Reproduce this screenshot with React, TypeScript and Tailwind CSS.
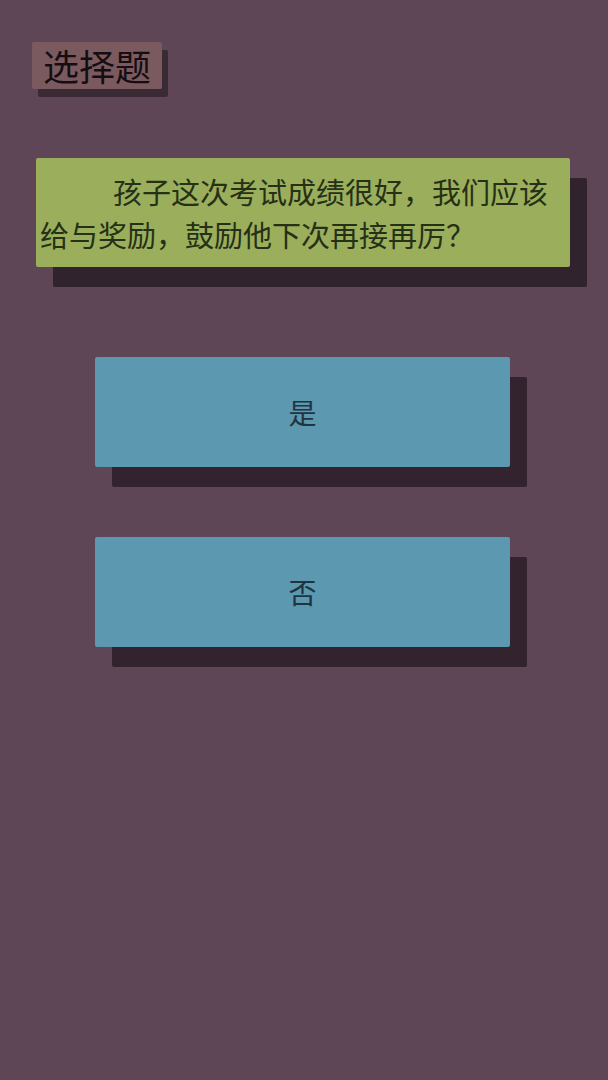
import React from 'react';

const font = { fontFamily: '"Noto Sans CJK SC", "Noto Sans", sans-serif' };

function AnswerButton({ label }: { label: string }) {
  return (
    <button
      className="ml-[95px] w-[415px] h-[110px] rounded-[2px] bg-[#5c98af] text-[#1e3440] text-[28px] flex items-center justify-center shadow-[17px_20px_0_#33232e]"
      style={font}
    >
      {label}
    </button>
  );
}

export default function App() {
  return (
    <div className="w-[608px] h-[1080px] bg-[#5f4656] flex flex-col overflow-hidden" style={font}>
      {/* 标题 */}
      <div className="mt-[42px] ml-[32px] w-[130px] h-[47px] rounded-[2px] bg-[#7b5a5f] text-[#150d12] text-[36px] leading-[47px] text-center shadow-[6px_8px_0_#3a2a34]">
        选择题
      </div>

      {/* 题目 */}
      <div className="mt-[69px] ml-[36px] w-[534px] h-[109px] rounded-[2px] bg-[#9aae5c] text-[#263016] text-[29px] leading-[43px] pl-[4px] pt-[12px] indent-[73px] shadow-[17px_20px_0_#31232d]">
        孩子这次考试成绩很好，我们应该给与奖励，鼓励他下次再接再厉？
      </div>

      <div className="mt-[90px]">
        <AnswerButton label="是" />
      </div>
      <div className="mt-[70px]">
        <AnswerButton label="否" />
      </div>
    </div>
  );
}
